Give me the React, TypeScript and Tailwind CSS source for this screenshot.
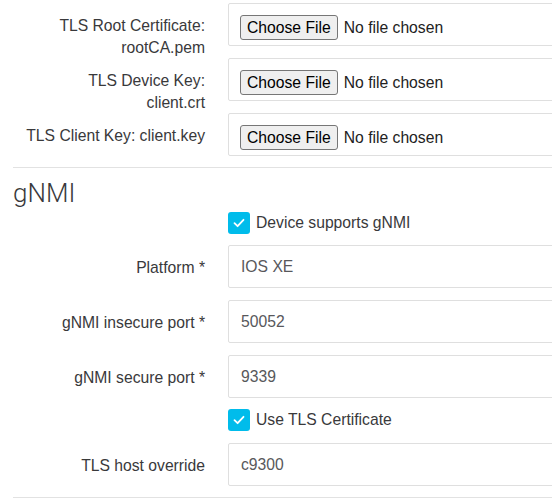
import React from "react";

const FILE_FIELDS = [
  { label: ["TLS Root Certificate:", "rootCA.pem"] },
  { label: ["TLS Device Key:", "client.crt"] },
  { label: ["TLS Client Key: client.key"] },
];

function Check({ text, className = "" }: { text: string; className?: string }) {
  return (
    <div className={"flex h-[22px] items-center pl-[215px] " + className}>
      <span className="flex h-[22px] w-[22px] items-center justify-center rounded-[3px] bg-[#00bceb]">
        <svg width="12" height="10" viewBox="0 0 12 10" fill="none">
          <path d="M1.5 5.2 L4.6 8.2 L10.5 1.8" stroke="#fff" strokeWidth="1.8" strokeLinecap="round" strokeLinejoin="round" />
        </svg>
      </span>
      <span className="ml-[6px] text-[15.7px] text-[#39393b]">{text}</span>
    </div>
  );
}

function Row({ label, children, className = "" }: { label: string[]; children: React.ReactNode; className?: string }) {
  return (
    <div className={"flex h-[43px] " + className}>
      <div className="w-[192px] shrink-0 pt-[12px] text-right text-[15.7px] leading-[22px] text-[#39393b]">
        {label.map((l) => (
          <div key={l} className="whitespace-nowrap">
            {l}
          </div>
        ))}
      </div>
      <div className="ml-[23px] flex-1">{children}</div>
    </div>
  );
}

function TextBox({ value }: { value: string }) {
  return (
    <div className="flex h-[43px] items-center rounded-[2px] border border-[#dfdfdf] px-[12px] text-[15.7px] text-[#58585b]">
      {value}
    </div>
  );
}

function FileBox() {
  return (
    <div className="flex h-[43px] items-start rounded-[2px] border border-[#dfdfdf] pl-[11px] pt-[11px]">
      <span className="flex h-[25px] items-center rounded-[3px] border border-[#767676] bg-[#efefef] px-[6px] text-[15.7px] text-black">
        Choose File
      </span>
      <span className="ml-[6px] flex h-[25px] items-center text-[15.7px] text-[#222]">No file chosen</span>
    </div>
  );
}

export default function App() {
  return (
    <div className="h-[499px] w-full overflow-hidden bg-white" style={{ fontFamily: '"Liberation Sans", Arial, sans-serif' }}>
      <div className="w-[640px] pl-[13px] pt-[3px]">
        <div className="flex flex-col gap-[12px]">
          {FILE_FIELDS.map((f) => (
            <Row key={f.label[0]} label={f.label}>
              <FileBox />
            </Row>
          ))}
        </div>
        <div className="mt-[11px] border-t border-[#e2e2e2]" />

        <h2
          className="mt-[9px] text-[26px] font-light leading-[32px] text-[#39393b]"
          style={{ fontFamily: "Roboto, sans-serif" }}
        >
          gNMI
        </h2>

        <div className="flex flex-col">
          <Check text="Device supports gNMI" className="mt-[3px]" />
          <Row label={["Platform *"]} className="mt-[11px]">
            <TextBox value="IOS XE" />
          </Row>
          <Row label={["gNMI insecure port *"]} className="mt-[12px]">
            <TextBox value="50052" />
          </Row>
          <Row label={["gNMI secure port *"]} className="mt-[12px]">
            <TextBox value="9339" />
          </Row>
          <Check text="Use TLS Certificate" className="mt-[11px]" />
          <Row label={["TLS host override"]} className="mt-[12px]">
            <TextBox value="c9300" />
          </Row>
        </div>
        <div className="mt-[11px] border-t border-[#e2e2e2]" />
      </div>
    </div>
  );
}
